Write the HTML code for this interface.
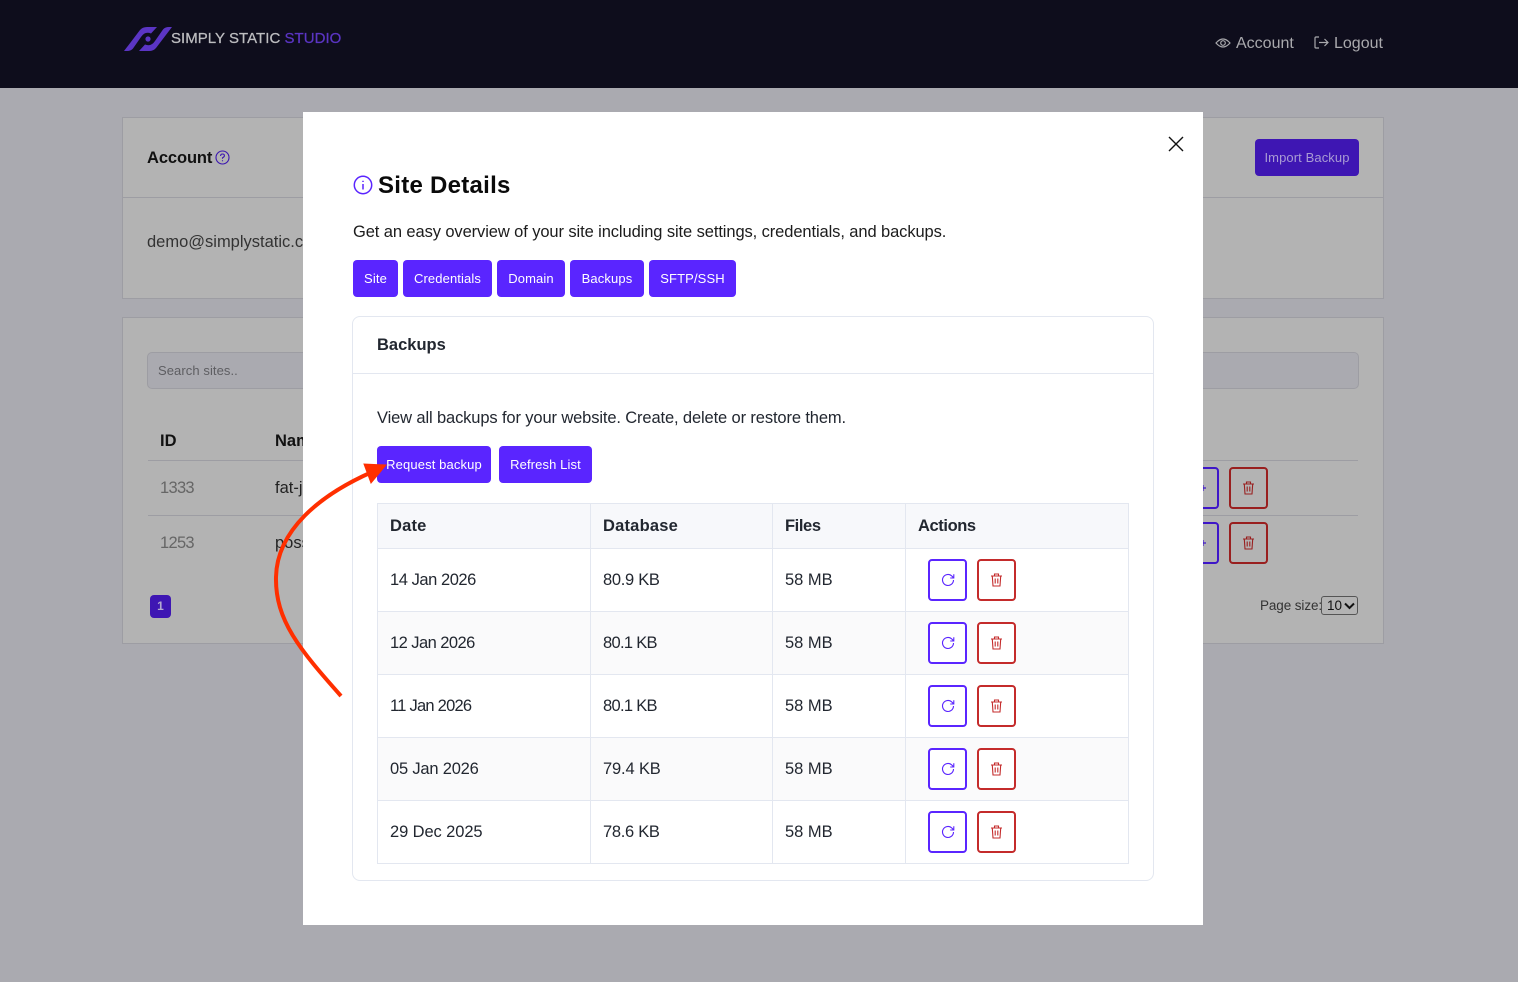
<!DOCTYPE html>
<html><head><meta charset="utf-8"><style>
html,body{margin:0;padding:0}
body{width:1518px;height:982px;position:relative;overflow:hidden;background:#aaaab0;font-family:"Liberation Sans",sans-serif;color:#111}
.a,.t{position:absolute}
.t{white-space:nowrap}
.hdr{left:0;top:0;width:1518px;height:88px;background:#0e0d1c}
.panel{background:#b3b3b3;border:1px solid #9d9da3;box-sizing:border-box}
.line{background:#9d9da3;height:1px}
.modal{left:303px;top:112px;width:900px;height:813px;background:#fff}
.btn{position:absolute;background:#5a25ff;color:#fff;border-radius:4px;height:37px;line-height:37px;font-size:13px;letter-spacing:.12px;text-align:center;white-space:nowrap}
.h{font-weight:bold}
.ib{position:absolute;width:39px;height:42px;box-sizing:border-box;border:2px solid #5a25ff;border-radius:4px;background:#fff}
.ib.r{border-color:#c42b2b}
.ib svg,.ob svg{position:absolute;left:11px;top:12px}
.ob{position:absolute;width:39px;height:42px;box-sizing:border-box;border:2px solid #991f1f;border-radius:4px}
.c{font-size:16.5px;color:#222730;line-height:19px}
.b{background:#e3e7f0}
</style></head><body>
<div class="a hdr"></div>
<svg class="a" style="left:122px;top:24px" width="52" height="30" viewBox="122 24 52 30"><path d="M124 51 L140 30 Q142.5 27 147 27 L157 27 L151 33.5 Q145 31 141 37 L133 48.5 Q131 51 127 51Z M172 27 L156 48 Q153.5 51 149 51 L139 51 L145 44.5 Q151 47 155 41 L163 29.5 Q165 27 169 27Z" fill="#5b35c4"/><circle cx="148" cy="39" r="2.6" fill="#5b35c4"/></svg>
<div class="t" style="left:171px;top:30px;font-size:15px;line-height:17px;color:#bdbdc0;letter-spacing:.03px;-webkit-text-stroke:.25px">SIMPLY STATIC <span style="color:#5b35c4">STUDIO</span></div>
<svg class="a" style="left:1215px;top:36px" width="16" height="14" viewBox="0 0 16 14" fill="none" stroke="#a9a9ad" stroke-width="1.2"><path d="M1 7 Q8 -1 15 7 Q8 15 1 7Z"/><circle cx="8" cy="7" r="2.3"/></svg>
<div class="t" style="left:1236px;top:34px;font-size:16px;line-height:19px;color:#a9a9ad">Account</div>
<svg class="a" style="left:1314px;top:35px" width="15" height="15" viewBox="0 0 15 15" fill="none" stroke="#a9a9ad" stroke-width="1.2"><path d="M5 2 H2 Q1 2 1 3 V12 Q1 13 2 13 H5 M5 7.5 H14 M10.5 4 L14 7.5 L10.5 11"/></svg>
<div class="t" style="left:1334px;top:34px;font-size:16px;line-height:19px;color:#a9a9ad">Logout</div>

<div class="a panel" style="left:122px;top:117px;width:1262px;height:182px"></div>
<div class="a line" style="left:123px;top:197px;width:1260px"></div>
<div class="t h" style="left:147px;top:149px;font-size:16.5px;line-height:19px;color:#111;letter-spacing:-.1px">Account</div>
<svg class="a" style="left:215px;top:150px" width="15" height="15" viewBox="0 0 15 15" fill="none" stroke="#3a14b0" stroke-width="1.1"><circle cx="7.5" cy="7.5" r="6.5"/><path d="M5.6 6 Q5.6 4 7.5 4 Q9.4 4 9.4 5.7 Q9.4 6.8 7.5 7.8 V8.8 M7.5 10.3 V11.2"/></svg>
<div class="t" style="left:147px;top:233px;font-size:16.5px;line-height:19px;color:#333">demo@simplystatic.c</div>
<div class="a" style="left:1255px;top:139px;width:104px;height:37px;background:#3e16b3;border-radius:4px;color:#a99bd4;font-size:13px;letter-spacing:.1px;line-height:37px;text-align:center">Import Backup</div>

<div class="a panel" style="left:122px;top:317px;width:1262px;height:327px"></div>
<div class="a" style="left:147px;top:352px;width:1212px;height:37px;box-sizing:border-box;background:#aaaab0;border:1px solid #9d9da3;border-radius:5px"></div>
<div class="t" style="left:158px;top:363px;font-size:13px;line-height:16px;color:#5e5e62;letter-spacing:.08px">Search sites..</div>
<div class="t h" style="left:160px;top:432px;font-size:16.5px;line-height:19px">ID</div>
<div class="t h" style="left:275px;top:432px;font-size:16.5px;line-height:19px">Name</div>
<div class="a line" style="left:148px;top:460px;width:1210px"></div>
<div class="a line" style="left:148px;top:515px;width:1210px"></div>
<div class="t" style="left:160px;top:479px;font-size:16.5px;line-height:19px;color:#666;letter-spacing:-.7px">1333</div>
<div class="t" style="left:275px;top:479px;font-size:16.5px;line-height:19px;color:#222">fat-j</div>
<div class="t" style="left:160px;top:534px;font-size:16.5px;line-height:19px;color:#666;letter-spacing:-.7px">1253</div>
<div class="t" style="left:275px;top:534px;font-size:16.5px;line-height:19px;color:#222">poss</div>
<div class="a" style="left:150px;top:595px;width:21px;height:23px;background:#3e16b3;border-radius:4px;color:#b3aad0;font-size:12px;font-weight:bold;line-height:23px;text-align:center">1</div>
<div class="t" style="left:1260px;top:598px;font-size:13.5px;line-height:16px;color:#333;letter-spacing:-.1px">Page size:</div>
<div class="a" style="left:1321px;top:596px;width:37px;height:19px;box-sizing:border-box;border:1px solid #555;border-radius:3px;font-size:13.5px;line-height:17px;padding-left:5px;color:#111;background:#b3b3b3">10<svg class="a" style="left:22px;top:5px" width="11" height="8" viewBox="0 0 11 8" fill="none" stroke="#111" stroke-width="2"><path d="M1 1.5 L5.5 6 L10 1.5"/></svg></div>
<div class="ob" style="left:1180px;top:467px;border-color:#3e16c8"><svg style="left:18px;top:16px" width="6" height="6" viewBox="0 0 6 6"><path d="M3 0V6M0 3H6" stroke="#3e16c8" stroke-width="1.2"/></svg></div>
<div class="ob" style="left:1180px;top:522px;border-color:#3e16c8"><svg style="left:18px;top:16px" width="6" height="6" viewBox="0 0 6 6"><path d="M3 0V6M0 3H6" stroke="#3e16c8" stroke-width="1.2"/></svg></div>
<div class="ob" style="left:1229px;top:467px"><svg width="13" height="14" viewBox="0 0 13 14" fill="none" stroke="#991f1f" stroke-width="1.1"><path d="M1 3H12M4.5 3V1H8.5V3M2.3 3L3 13H10L10.7 3M5.2 5.5V10.5M7.8 5.5V10.5"/></svg></div>
<div class="ob" style="left:1229px;top:522px"><svg width="13" height="14" viewBox="0 0 13 14" fill="none" stroke="#991f1f" stroke-width="1.1"><path d="M1 3H12M4.5 3V1H8.5V3M2.3 3L3 13H10L10.7 3M5.2 5.5V10.5M7.8 5.5V10.5"/></svg></div>

<div class="a modal"></div>
<svg class="a" style="left:1167px;top:135px" width="18" height="18" viewBox="0 0 18 18" stroke="#111" stroke-width="1.4"><path d="M2 2L16 16M16 2L2 16"/></svg>
<svg class="a" style="left:353px;top:175px" width="20" height="20" viewBox="0 0 20 20" fill="none" stroke="#5a25ff" stroke-width="1.5"><circle cx="10" cy="10" r="8.7"/><path d="M10 9V14.5M10 5.7V7"/></svg>
<div class="t h" style="left:378px;top:171px;font-size:24px;line-height:29px;color:#0a0a0a;letter-spacing:.27px">Site Details</div>
<div class="t" style="left:353px;top:222px;font-size:16.5px;line-height:20px;color:#1c1c1c;letter-spacing:-.1px">Get an easy overview of your site including site settings, credentials, and backups.</div>
<div class="btn" style="left:353px;top:260px;width:45px">Site</div>
<div class="btn" style="left:403px;top:260px;width:89px">Credentials</div>
<div class="btn" style="left:497px;top:260px;width:68px">Domain</div>
<div class="btn" style="left:570px;top:260px;width:74px">Backups</div>
<div class="btn" style="left:649px;top:260px;width:87px">SFTP/SSH</div>

<div class="a" style="left:352px;top:316px;width:802px;height:565px;box-sizing:border-box;border:1px solid #e3e7f0;border-radius:8px"></div>
<div class="a b" style="left:353px;top:373px;width:800px;height:1px"></div>
<div class="t h" style="left:377px;top:336px;font-size:16.5px;line-height:19px;color:#222730">Backups</div>
<div class="t" style="left:377px;top:408px;font-size:16.5px;line-height:20px;color:#222730;letter-spacing:-.13px">View all backups for your website. Create, delete or restore them.</div>
<div class="btn" style="left:377px;top:446px;width:114px">Request backup</div>
<div class="btn" style="left:499px;top:446px;width:93px">Refresh List</div>

<div class="a" style="left:378px;top:504px;width:750px;height:44px;background:#f7f8fb"></div>
<div class="a" style="left:378px;top:612px;width:750px;height:62px;background:#fafafb"></div>
<div class="a" style="left:378px;top:738px;width:750px;height:62px;background:#fafafb"></div>
<div class="a" style="left:377px;top:503px;width:752px;height:361px;box-sizing:border-box;border:1px solid #e3e7f0"></div>
<div class="a b" style="left:590px;top:504px;width:1px;height:359px"></div>
<div class="a b" style="left:772px;top:504px;width:1px;height:359px"></div>
<div class="a b" style="left:905px;top:504px;width:1px;height:359px"></div>
<div class="a b" style="left:378px;top:548px;width:750px;height:1px"></div>
<div class="a b" style="left:378px;top:611px;width:750px;height:1px"></div>
<div class="a b" style="left:378px;top:674px;width:750px;height:1px"></div>
<div class="a b" style="left:378px;top:737px;width:750px;height:1px"></div>
<div class="a b" style="left:378px;top:800px;width:750px;height:1px"></div>
<div class="t h c" style="left:390px;top:517px;letter-spacing:.2px">Date</div>
<div class="t h c" style="left:603px;top:517px;letter-spacing:.2px">Database</div>
<div class="t h c" style="left:785px;top:517px;letter-spacing:-.4px">Files</div>
<div class="t h c" style="left:918px;top:517px;letter-spacing:-.4px">Actions</div>

<div class="t c" style="left:390px;top:571px;letter-spacing:-.45px">14 Jan 2026</div><div class="t c" style="left:603px;top:571px;letter-spacing:-.3px">80.9 KB</div><div class="t c" style="left:785px;top:571px">58 MB</div>
<div class="t c" style="left:390px;top:634px;letter-spacing:-.55px">12 Jan 2026</div><div class="t c" style="left:603px;top:634px;letter-spacing:-.7px">80.1 KB</div><div class="t c" style="left:785px;top:634px">58 MB</div>
<div class="t c" style="left:390px;top:697px;letter-spacing:-.75px">11 Jan 2026</div><div class="t c" style="left:603px;top:697px;letter-spacing:-.7px">80.1 KB</div><div class="t c" style="left:785px;top:697px">58 MB</div>
<div class="t c" style="left:390px;top:760px;letter-spacing:-.2px">05 Jan 2026</div><div class="t c" style="left:603px;top:760px;letter-spacing:-.15px">79.4 KB</div><div class="t c" style="left:785px;top:760px">58 MB</div>
<div class="t c" style="left:390px;top:823px;letter-spacing:-.1px">29 Dec 2025</div><div class="t c" style="left:603px;top:823px;letter-spacing:-.3px">78.6 KB</div><div class="t c" style="left:785px;top:823px">58 MB</div>

<div class="ib" style="left:928px;top:559px"><svg width="14" height="14" viewBox="0 0 14 14" fill="none" stroke="#5a25ff" stroke-width="1.1"><path d="M12.5 7A5.5 5.5 0 1 1 10.8 3L12.5 4.7M12.8 1.3V5H9.2"/></svg></div>
<div class="ib r" style="left:977px;top:559px"><svg width="13" height="14" viewBox="0 0 13 14" fill="none" stroke="#c42b2b" stroke-width="1.1"><path d="M1 3H12M4.5 3V1H8.5V3M2.3 3L3 13H10L10.7 3M5.2 5.5V10.5M7.8 5.5V10.5"/></svg></div>
<div class="ib" style="left:928px;top:622px"><svg width="14" height="14" viewBox="0 0 14 14" fill="none" stroke="#5a25ff" stroke-width="1.1"><path d="M12.5 7A5.5 5.5 0 1 1 10.8 3L12.5 4.7M12.8 1.3V5H9.2"/></svg></div>
<div class="ib r" style="left:977px;top:622px"><svg width="13" height="14" viewBox="0 0 13 14" fill="none" stroke="#c42b2b" stroke-width="1.1"><path d="M1 3H12M4.5 3V1H8.5V3M2.3 3L3 13H10L10.7 3M5.2 5.5V10.5M7.8 5.5V10.5"/></svg></div>
<div class="ib" style="left:928px;top:685px"><svg width="14" height="14" viewBox="0 0 14 14" fill="none" stroke="#5a25ff" stroke-width="1.1"><path d="M12.5 7A5.5 5.5 0 1 1 10.8 3L12.5 4.7M12.8 1.3V5H9.2"/></svg></div>
<div class="ib r" style="left:977px;top:685px"><svg width="13" height="14" viewBox="0 0 13 14" fill="none" stroke="#c42b2b" stroke-width="1.1"><path d="M1 3H12M4.5 3V1H8.5V3M2.3 3L3 13H10L10.7 3M5.2 5.5V10.5M7.8 5.5V10.5"/></svg></div>
<div class="ib" style="left:928px;top:748px"><svg width="14" height="14" viewBox="0 0 14 14" fill="none" stroke="#5a25ff" stroke-width="1.1"><path d="M12.5 7A5.5 5.5 0 1 1 10.8 3L12.5 4.7M12.8 1.3V5H9.2"/></svg></div>
<div class="ib r" style="left:977px;top:748px"><svg width="13" height="14" viewBox="0 0 13 14" fill="none" stroke="#c42b2b" stroke-width="1.1"><path d="M1 3H12M4.5 3V1H8.5V3M2.3 3L3 13H10L10.7 3M5.2 5.5V10.5M7.8 5.5V10.5"/></svg></div>
<div class="ib" style="left:928px;top:811px"><svg width="14" height="14" viewBox="0 0 14 14" fill="none" stroke="#5a25ff" stroke-width="1.1"><path d="M12.5 7A5.5 5.5 0 1 1 10.8 3L12.5 4.7M12.8 1.3V5H9.2"/></svg></div>
<div class="ib r" style="left:977px;top:811px"><svg width="13" height="14" viewBox="0 0 13 14" fill="none" stroke="#c42b2b" stroke-width="1.1"><path d="M1 3H12M4.5 3V1H8.5V3M2.3 3L3 13H10L10.7 3M5.2 5.5V10.5M7.8 5.5V10.5"/></svg></div>

<svg class="a" style="left:0;top:0" width="1518" height="982" viewBox="0 0 1518 982" fill="none"><path d="M341 696 C300 650 275 620 276 577 C277 530 320 495 372 472" stroke="#ff2f00" stroke-width="4"/><path d="M386 465 L364 464 L371 483Z" fill="#ff2f00" stroke="#ff2f00" stroke-width="1"/></svg>
</body></html>
